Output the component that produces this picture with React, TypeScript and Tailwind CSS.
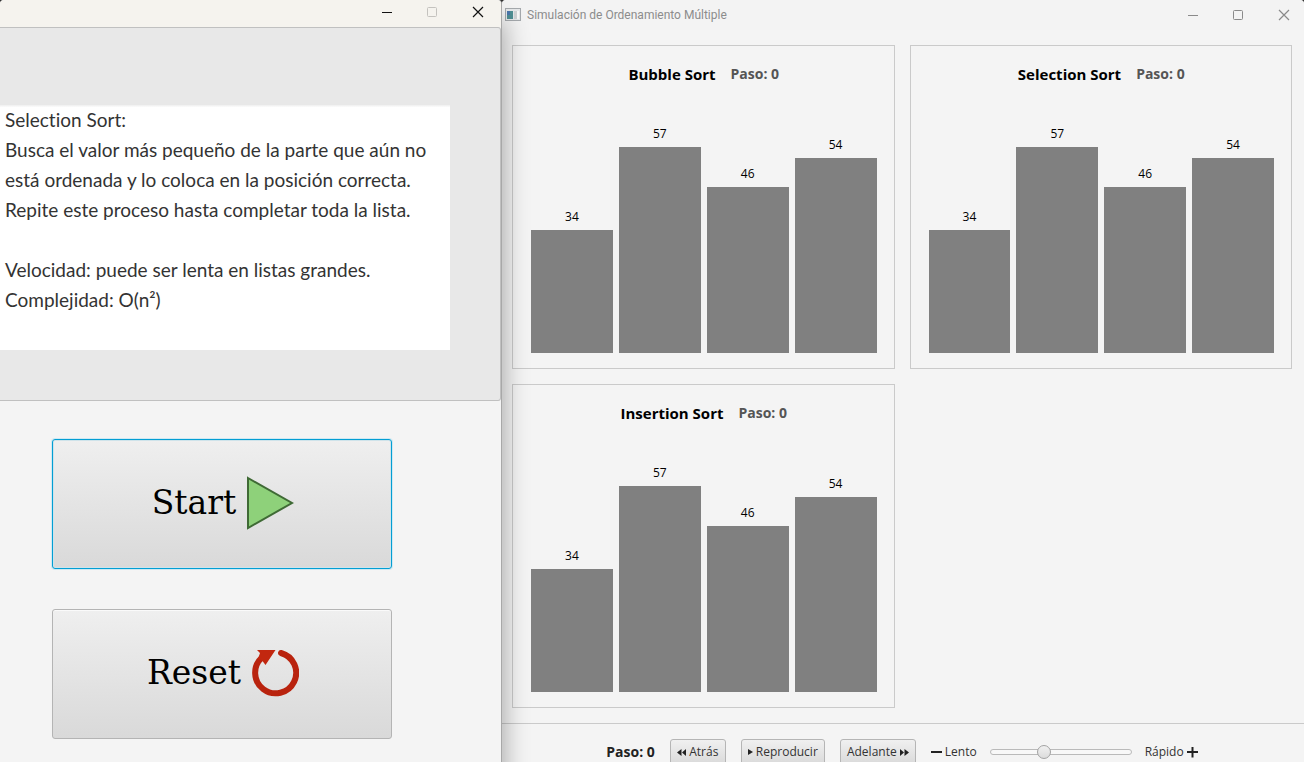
import { useState, type ReactNode } from "react";

const VALUES = [34, 57, 46, 54];
const UNIT_HEIGHT = 3.6;

const DESCRIPTION = [
  "Selection Sort:",
  "Busca el valor más pequeño de la parte que aún no",
  "está ordenada y lo coloca en la posición correcta.",
  "Repite este proceso hasta completar toda la lista.",
  "",
  "Velocidad: puede ser lenta en listas grandes.",
  "Complejidad: O(n²)",
].join("\n");

function WindowControls({ restoreColor, color }: { restoreColor: string; color: string }) {
  return (
    <div className="flex">
      <button type="button" aria-label="Minimizar" className="flex w-[45px] items-center justify-center">
        <svg width="12" height="12" stroke={color} fill="none">
          <path d="M1 6.5h10" />
        </svg>
      </button>
      <button type="button" aria-label="Maximizar" className="flex w-[46px] items-center justify-center">
        <svg width="12" height="12" stroke={restoreColor} fill="none">
          <rect x="1.5" y="1.5" width="9" height="9" rx="1" />
        </svg>
      </button>
      <button type="button" aria-label="Cerrar" className="flex w-[46px] items-center justify-center">
        <svg width="12" height="12" stroke={color} strokeWidth="1.2" fill="none">
          <path d="M1 1l10 10M11 1L1 11" />
        </svg>
      </button>
    </div>
  );
}

function BigButton({ focused, children }: { focused?: boolean; children: ReactNode }) {
  return (
    <button
      type="button"
      className={`flex h-[130px] w-full items-center justify-center gap-[10px] rounded-[3px] border bg-linear-to-b from-[#efefef] to-[#d9d9d9] pb-[3px] pl-[2px] font-['DejaVu_Serif',serif] text-[33px] text-black ${
        focused
          ? "border-[#039ed3] shadow-[0_0_0_1px_#cfe9f3,inset_0_0_0_1px_#cfe3ea]"
          : "border-[#b4b4b4] shadow-[inset_0_1px_0_#fafafa]"
      }`}
    >
      {children}
    </button>
  );
}

function PlayIcon() {
  return (
    <svg width="48" height="54" viewBox="0 0 48 54">
      <path d="M2 2L46 27L2 52Z" fill="#8ed17a" stroke="#3f6a35" strokeWidth="2" />
    </svg>
  );
}

function ResetIcon() {
  return (
    <svg width="48" height="48" viewBox="0 0 48 48">
      <path d="M30 4A20.5 20.5 0 1 1 11 8.5" fill="none" stroke="#b9230e" strokeWidth="6" strokeLinecap="round" />
      <path d="M6 1H24.5L14.5 16L11.500 12L7 10L9 4Z" fill="#c2270f" />
    </svg>
  );
}

function SortPanel({ title }: { title: string }) {
  return (
    <section className="flex flex-col border border-[#cacaca] pt-4 pr-[17px] pb-[15px] pl-[18px]">
      <header className="flex h-6 items-center justify-center gap-[15px]">
        <h2 className="text-[15px] font-bold text-black">{title}</h2>
        <span className="text-sm font-bold text-[#555]">Paso: 0</span>
      </header>
      <div className="flex h-[267px] items-end gap-[6px]">
        {VALUES.map((v) => (
          <div key={v} className="flex flex-1 flex-col items-center">
            <span className="mb-[5px] text-xs leading-4 text-black">{v}</span>
            <div className="w-full bg-[#808080]" style={{ height: Math.ceil(v * UNIT_HEIGHT) }} />
          </div>
        ))}
      </div>
    </section>
  );
}

function ToolButton({ className, children }: { className: string; children: ReactNode }) {
  return (
    <button
      type="button"
      className={`flex h-[26px] shrink-0 items-center justify-center gap-[3px] rounded-[3px] border border-[#b5b5b5] bg-linear-to-b from-[#f0f0f0] to-[#dadada] ${className}`}
    >
      {children}
    </button>
  );
}

function DoubleArrow({ flip }: { flip?: boolean }) {
  return (
    <svg width="9" height="7" viewBox="0 0 9 7" fill="#222" className={flip ? "rotate-180" : ""}>
      <path d="M0 0L4 3.5L0 7ZM4.5 0L9 3.5L4.5 7Z" />
    </svg>
  );
}

function MenuWindow() {
  return (
    <div className="z-10 flex flex-col rounded-t border-r border-[#a8a8a8] bg-[#f4f4f4] shadow-[3px_20px_24px_rgba(0,0,0,0.3)]">
      <div className="flex h-[27px] justify-end rounded-t bg-[#f5f3ee] pb-1">
        <WindowControls color="#111" restoreColor="#c4c2be" />
      </div>
      <div className="rounded-r-[3px] border-y border-r border-[#c0c0c0] bg-[#e8e8e8] pt-[77px] pr-[50px] pb-[50px]">
        <p className="h-[245px] overflow-hidden bg-white bg-linear-to-b from-[#efefef] via-white via-[1%] to-white pl-[5px] font-[Lato,sans-serif] text-[19px] leading-[30px] whitespace-pre text-[#333] [font-variant-ligatures:none]">
          {DESCRIPTION}
        </p>
      </div>
      <div className="flex flex-col gap-10 pt-[38px] pr-[109px] pl-[52px]">
        <BigButton focused>
          Start
          <PlayIcon />
        </BigButton>
        <BigButton>
          Reset
          <ResetIcon />
        </BigButton>
      </div>
    </div>
  );
}

function SimulationWindow() {
  const [speed, setSpeed] = useState(37);

  return (
    <div className="flex min-w-0 flex-col rounded-t bg-[#f4f4f4]">
      <div className="flex h-[30px] items-stretch justify-between rounded-t bg-[#f3f3f3] pl-[3px] text-[#8c8c8c]">
        <div className="flex items-center gap-[6px]">
          <svg width="16" height="14" viewBox="0 0 16 14">
            <rect x="0.5" y="0.5" width="15" height="12" fill="#e6e8ea" stroke="#a5a9ad" />
            <rect x="2" y="3" width="6" height="8" fill="#4f8f94" />
            <rect x="2" y="3" width="3" height="4" fill="#4a77ad" />
            <rect x="9" y="3" width="3" height="8" fill="#d0d3d5" />
            <rect x="12" y="3" width="2" height="8" fill="#f8f8f8" />
          </svg>
          <h1 className="font-[Roboto,sans-serif] text-xs">Simulación de Ordenamiento Múltiple</h1>
        </div>
        <div className="-mr-[3px] flex pb-px">
          <WindowControls color="#8a8a8a" restoreColor="#8a8a8a" />
        </div>
      </div>

      <main className="grid grid-cols-2 gap-[15px] pt-[15px] pr-3 pb-[15px] pl-[10px]">
        <SortPanel title="Bubble Sort" />
        <SortPanel title="Selection Sort" />
        <SortPanel title="Insertion Sort" />
      </main>

      <footer className="flex items-center justify-center gap-[15px] border-t border-[#cacaca] pt-[15px] pr-[2px] pb-4 text-xs whitespace-nowrap text-[#333]">
        <span className="text-sm font-bold text-[#222]">Paso: 0</span>
        <ToolButton className="w-14">
          <DoubleArrow flip />
          Atrás
        </ToolButton>
        <ToolButton className="w-[84px]">
          <svg width="5" height="6" viewBox="0 0 5 6" fill="#222">
            <path d="M0 0L5 3L0 6Z" />
          </svg>
          Reproducir
        </ToolButton>
        <ToolButton className="w-[76px]">
          Adelante
          <DoubleArrow />
        </ToolButton>
        <label htmlFor="speed" className="flex items-center gap-[3px]">
          <svg width="11" height="11" stroke="#222" strokeWidth="2">
            <path d="M0 5H11" />
          </svg>
          Lento
        </label>
        <input
          id="speed"
          type="range"
          value={speed}
          onChange={(e) => setSpeed(Number(e.target.value))}
          className="-mx-[2px] h-4 w-[142px] appearance-none bg-transparent [&::-webkit-slider-runnable-track]:h-[6px] [&::-webkit-slider-runnable-track]:rounded-full [&::-webkit-slider-runnable-track]:border [&::-webkit-slider-runnable-track]:border-[#bababa] [&::-webkit-slider-runnable-track]:bg-[#f8f8f8] [&::-webkit-slider-thumb]:-mt-[5px] [&::-webkit-slider-thumb]:h-[14px] [&::-webkit-slider-thumb]:w-[14px] [&::-webkit-slider-thumb]:appearance-none [&::-webkit-slider-thumb]:rounded-full [&::-webkit-slider-thumb]:border [&::-webkit-slider-thumb]:border-[#a3a3a3] [&::-webkit-slider-thumb]:bg-linear-to-b [&::-webkit-slider-thumb]:from-[#f0f0f0] [&::-webkit-slider-thumb]:to-[#dcdcdc]"
        />
        <span className="flex items-center gap-[3px]">
          Rápido
          <svg width="11" height="11" stroke="#222" strokeWidth="2">
            <path d="M0 5H11M5.5 0V10.5" />
          </svg>
        </span>
      </footer>
    </div>
  );
}

export default function App() {
  return (
    <div className="grid h-screen grid-cols-[502fr_802fr] overflow-hidden bg-[#333] font-['Open_Sans','Noto_Sans',sans-serif]">
      <MenuWindow />
      <SimulationWindow />
    </div>
  );
}
